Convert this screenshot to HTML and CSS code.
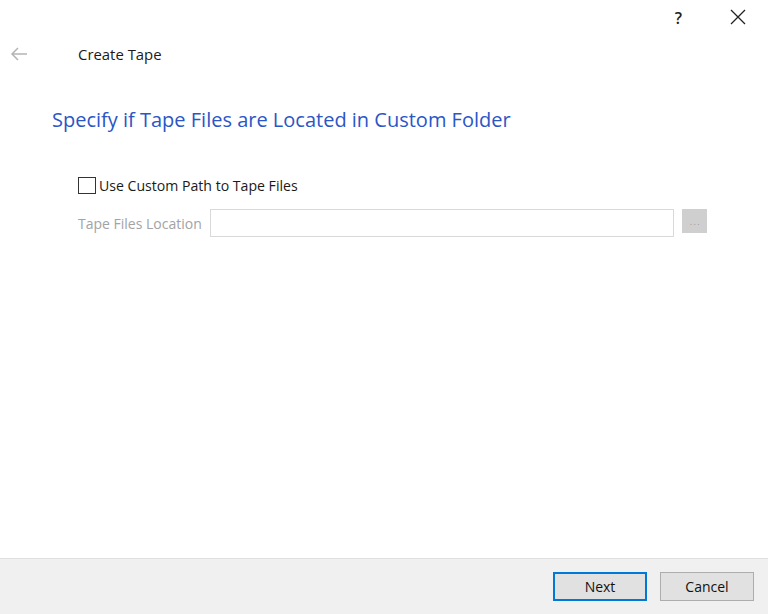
FILE: index.html
```html
<!DOCTYPE html>
<html>
<head>
<meta charset="utf-8">
<link rel="stylesheet" href="styles.css">
</head>
<body>
<div class="dialog">
  <div class="titlebar">
    <span class="help">?</span>
    <svg class="close" width="16" height="16" viewBox="0 0 16 16"><path d="M1 1L15 15M15 1L1 15" stroke="#222" stroke-width="1.3" fill="none"/></svg>
  </div>
  <div class="nav">
    <svg class="back" width="18" height="14" viewBox="0 0 18 14"><path d="M17 7H2M8 1L2 7L8 13" stroke="#b4b4b4" stroke-width="1.5" fill="none"/></svg>
    <span class="navtitle">Create Tape</span>
  </div>
  <div class="content">
    <h1 class="heading">Specify if Tape Files are Located in Custom Folder</h1>
    <div class="options">
      <label class="check"><span class="box"></span><span>Use Custom Path to Tape Files</span></label>
      <div class="pathrow">
        <span class="pathlabel">Tape Files Location</span>
        <span class="pathinput"></span>
        <span class="browse">. . .</span>
      </div>
    </div>
  </div>
  <div class="footer">
    <button class="btn primary">Next</button>
    <button class="btn">Cancel</button>
  </div>
</div>
</body>
</html>
```
FILE: styles.css
```css
html, body { margin: 0; padding: 0; }
body { width: 768px; height: 614px; background: #fff; font-family: "Open Sans", "Noto Sans", sans-serif; color: #1a1a1a; overflow: hidden; }
.dialog { display: flex; flex-direction: column; height: 614px; }
.titlebar { height: 34px; display: flex; align-items: center; justify-content: flex-end; }
.help { font-size: 16px; font-weight: 600; color: #222; margin-right: 48px; line-height: 1; padding-top: 1px; }
.close { margin-right: 22px; }
.nav { height: 40px; display: flex; align-items: center; }
.back { margin-left: 10px; margin-right: 50px; }
.navtitle { font-size: 14.9px; color: #1a1a1a; }
.content { flex: 1; padding-left: 52px; }
.heading { margin: 33px 0 0; font-weight: normal; font-size: 20px; color: #2a56c6; line-height: 26px; }
.options { margin-top: 43px; padding-left: 26px; display: flex; flex-direction: column; gap: 14px; }
.check { display: flex; align-items: center; font-size: 14.1px; color: #1a1a1a; }
.box { width: 18px; height: 17px; border: 1px solid #333; margin-right: 3px; box-sizing: border-box; }
.pathrow { display: flex; align-items: center; }
.pathlabel { font-size: 14px; color: #a3a3a3; width: 132px; }
.pathinput { width: 464px; height: 28px; border: 1px solid #d9d9d9; box-sizing: border-box; margin-right: 8px; }
.browse { width: 25px; height: 24px; background: #cfcfcf; color: #999; font-size: 9px; display: flex; align-items: center; justify-content: center; margin-top: -4px; letter-spacing: -0.5px; }
.footer { height: 55px; background: #f0f0f0; border-top: 1px solid #dfdfdf; display: flex; align-items: center; justify-content: flex-end; padding-right: 14px; gap: 13px; }
.btn { width: 94px; height: 29px; background: #e1e1e1; border: 1px solid #adadad; font-family: inherit; font-size: 14px; color: #111; padding: 0; }
.btn.primary { border: 2px solid #0078d7; }
```
